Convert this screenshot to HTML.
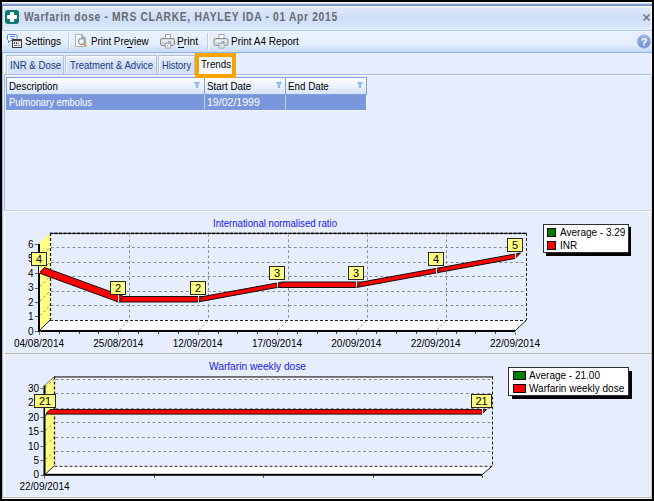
<!DOCTYPE html>
<html><head><meta charset="utf-8">
<style>
*{margin:0;padding:0;box-sizing:border-box}
html,body{width:654px;height:501px;overflow:hidden;background:#000}
body{position:relative;font-family:"Liberation Sans",sans-serif;font-size:11px;color:#000}
.a{position:absolute}
.t{white-space:nowrap;line-height:1;transform-origin:0 0}
#win{left:2px;top:2px;width:650px;height:497px;background:#e6edfd}
#title{left:2px;top:6px;width:650px;height:24px;background:linear-gradient(#f8fbff 0,#f8fbff 1px,#dce6f8 2px,#d8e4f8 6px,#cfdff8 10px,#d2e2fa 18px,#e0ebfc 22px,#e4eefd 24px)}
#tb{left:2px;top:31px;width:650px;height:21px;background:linear-gradient(#fafcff 0,#e8f0fd 1px,#e6effd 12px,#d4e4fa 17px,#c8dcf8 21px)}
.tab{top:55px;height:19px;border:1px solid #b0c2de;border-bottom:none;background:linear-gradient(#eef3fb 0,#e4ecf8 3px,#d8e4f7 6px,#d3e0f6 14px,#dae6f8 18px);box-shadow:inset 1px 1px 0 #f8fbff}
.tt{top:60px;color:#1a3a88}
svg text{font-family:"Liberation Sans",sans-serif;font-size:10px;fill:#000}
</style></head><body>
<div class="a" id="win"></div>
<div class="a" id="title"></div>
<div class="a" style="left:2px;top:5px;width:1px;height:492px;background:#a0b8dc"></div>
<div class="a" style="left:3px;top:5px;width:1px;height:492px;background:#e4ecfa"></div>
<div class="a" style="left:4px;top:53px;width:1px;height:444px;background:#fbfdff"></div>
<div class="a" style="left:5px;top:496px;width:645px;height:1px;background:#eaf4fd"></div>
<div class="a" style="left:2px;top:497px;width:650px;height:1px;background:#bcb8b0"></div>
<div class="a" style="left:2px;top:498px;width:650px;height:1px;background:#f4f4f0"></div>
<div class="a" style="left:651px;top:5px;width:1px;height:70px;background:#f4f8ff"></div>
<div class="a" style="left:4px;top:74px;width:647px;height:1px;background:#a8bce0"></div>
<div class="a" style="left:4px;top:74px;width:1px;height:137px;background:#a8bce0"></div>
<div class="a" style="left:5px;top:75px;width:646px;height:1px;background:#fbfdff"></div>
<div class="a" style="left:651px;top:75px;width:1px;height:136px;background:#c8d8f4"></div>
<div class="a" style="left:651px;top:212px;width:1px;height:286px;background:#c8c0b0"></div><div class="a" style="left:650px;top:212px;width:1px;height:285px;background:#f0f4fd"></div>

<div class="a" style="left:2px;top:2px;width:650px;height:1px;background:#fcfdff"></div>
<div class="a" style="left:2px;top:3px;width:650px;height:1px;background:#c4d4ee"></div>
<div class="a" style="left:2px;top:4px;width:650px;height:1px;background:#8aa6d6"></div>
<div class="a" style="left:2px;top:5px;width:650px;height:1px;background:#7390bc"></div>
<div class="a" style="left:2px;top:30px;width:650px;height:1px;background:#a8c8f0"></div>
<!-- app icon -->
<div class="a" style="left:5px;top:10px;width:14px;height:14px;border-radius:3px;background:#137870"></div>
<div class="a" style="left:10px;top:12px;width:4px;height:10px;background:#fff;border-radius:1px"></div>
<div class="a" style="left:7px;top:15px;width:10px;height:4px;background:#fff;border-radius:1px"></div>
<div class="a t" style="left:24px;top:11px;font-size:12px;font-weight:bold;color:#6a6c70;letter-spacing:0.8px;transform:scaleX(0.855)">Warfarin dose - MRS CLARKE, HAYLEY IDA - 01 Apr 2015</div>
<svg class="a" style="left:640px;top:10px" width="14" height="14"><path d="M3.5,4.5 L9.5,10.5 M9.5,4.5 L3.5,10.5" stroke="#707070" stroke-width="1.4"/></svg>

<div class="a" id="tb"></div>
<div class="a" style="left:2px;top:52px;width:650px;height:1px;background:#92b4e8"></div>
<div class="a t" style="left:25px;top:36px;transform:scaleX(0.905)">Settings</div>
<div class="a t" style="left:91px;top:36px;transform:scaleX(0.89)">Print Preview</div>
<div class="a t" style="left:177px;top:36px;transform:scaleX(0.93)">Print</div>
<div class="a t" style="left:231px;top:36px;transform:scaleX(0.91)">Print A4 Report</div>


<!-- toolbar separators -->
<div class="a" style="left:68px;top:33px;width:1px;height:17px;background:#b8cce8"></div>
<div class="a" style="left:69px;top:33px;width:1px;height:17px;background:#f8fbff"></div>
<div class="a" style="left:207px;top:33px;width:1px;height:17px;background:#b8cce8"></div>
<div class="a" style="left:208px;top:33px;width:1px;height:17px;background:#f8fbff"></div>
<svg class="a" style="left:0;top:0;z-index:5" width="654" height="120">
 <!-- settings -->
 <path d="M8.5,34.5 h7 a1.5,1.5 0 0 1 1.5,1.5 v3 a1.5,1.5 0 0 1 -1.5,1.5 h-5 l-2,2.5 v-2.5 a1.5,1.5 0 0 1 -1,-1.5 v-3 a1.5,1.5 0 0 1 1,-1.5z" fill="#fff" stroke="#4a8ae8"/>
 <line x1="10" y1="36.5" x2="15" y2="36.5" stroke="#4a8ae8"/>
 <line x1="10" y1="38.5" x2="14" y2="38.5" stroke="#7ab0f0"/>
 <rect x="12.5" y="39.5" width="9" height="8" fill="#e8eaf0" stroke="#3c3c3c"/>
 <rect x="12.5" y="39.5" width="9" height="1.5" fill="#3c3c3c"/>
 <rect x="14" y="42" width="1" height="2" fill="#444"/><rect x="16" y="42" width="1" height="2" fill="#444"/><rect x="18" y="42" width="1" height="2" fill="#999"/>
 <rect x="14" y="45" width="3" height="1" fill="#666"/><rect x="18" y="45" width="2" height="1" fill="#888"/>
 <!-- print preview -->
 <path d="M75.5,34.5 h6.5 l3.5,3.5 v8.5 h-10z" fill="#fafafa" stroke="#a8b0bc"/>
 <path d="M82,34.5 v3.5 h3.5" fill="#c8ccd4" stroke="#8090a0"/>
 <circle cx="81.5" cy="41.5" r="3" fill="#f4f8ff" stroke="#9aa0a8" stroke-width="1.3"/>
 <line x1="83.8" y1="43.8" x2="86.3" y2="46.3" stroke="#f0a030" stroke-width="2.2"/>
 <!-- print -->
 <g id="prn">
 <rect x="165.5" y="34.5" width="5" height="5" fill="#fff" stroke="#a0a4a8"/>
 <rect x="160.5" y="38.5" width="14" height="7" rx="1.5" fill="#d8d8d8" stroke="#909090"/>
 <rect x="162" y="40" width="11" height="2" fill="#ececec"/>
 <rect x="168" y="41" width="3" height="1.5" fill="#6aa8f0"/>
 <rect x="165.5" y="43.5" width="5" height="4.5" fill="#fff" stroke="#a0a4a8"/>
 <rect x="167" y="45" width="1.5" height="1.5" fill="#6aa8f0"/>
 </g>
 <use href="#prn" x="53.5" y="0"/>
 <!-- help -->
 <defs><linearGradient id="hg" x1="0" y1="0" x2="0" y2="1"><stop offset="0" stop-color="#9cb8e8"/><stop offset="1" stop-color="#6a8ed0"/></linearGradient></defs>
 <circle cx="644" cy="41.5" r="6.8" fill="url(#hg)"/>
 <circle cx="644" cy="41.5" r="6.8" fill="none" stroke="#a8c0e8" stroke-width="0.8"/>
 <text x="644" y="45.5" text-anchor="middle" style="font-family:'Liberation Sans',sans-serif;font-size:11px;font-weight:bold;fill:#fff">?</text>
 <!-- filter icons -->
 <g id="flt"><path d="M194.5,82.5 h5 l-1.8,2.5 v2.5 h-1.4 v-2.5z" fill="#a8c8f8" stroke="#78a8f0" stroke-width="0.8"/></g><use href="#flt" x="82"/><use href="#flt" x="163"/>
</svg>

<div class="a" style="left:178px;top:47px;width:6px;height:1px;background:#000"></div>
<div class="a" style="left:127px;top:47px;width:5px;height:1px;background:#000"></div>
<!-- tabs -->
<div class="a tab" style="left:6px;width:58px"></div>
<div class="a tab" style="left:65px;width:92px"></div>
<div class="a tab" style="left:158px;width:37px"></div>
<div class="a t tt" style="left:10px;transform:scaleX(0.88)">INR &amp; Dose</div>
<div class="a t tt" style="left:70px;transform:scaleX(0.87)">Treatment &amp; Advice</div>
<div class="a t tt" style="left:162px;transform:scaleX(0.85)">History</div>
<div class="a" style="left:195px;top:53px;width:41px;height:25px;border:4px solid #f5a300;background:#f8faff;z-index:6"></div>
<div class="a t" style="left:201px;top:59px;transform:scaleX(0.89);z-index:7">Trends</div>

<!-- grid -->
<div class="a" style="left:6px;top:77px;width:361px;height:18px;border:1px solid #7ea2e0;background:linear-gradient(#ffffff,#d6e4fb)"></div>
<div class="a" style="left:204px;top:78px;width:1px;height:16px;background:#7ea2e0"></div>
<div class="a" style="left:285px;top:78px;width:1px;height:16px;background:#7ea2e0"></div>
<div class="a t" style="left:9px;top:81px;transform:scaleX(0.89)">Description</div>
<div class="a t" style="left:207px;top:81px;transform:scaleX(0.89)">Start Date</div>
<div class="a t" style="left:288px;top:81px;transform:scaleX(0.89)">End Date</div>
<div class="a" style="left:6px;top:95px;width:360px;height:15px;background:#7a96dc"></div>
<div class="a" style="left:6px;top:110px;width:361px;height:1px;background:#f2f6fe"></div>
<div class="a" style="left:366px;top:95px;width:1px;height:15px;background:#f2f6fe"></div>
<div class="a" style="left:204px;top:95px;width:1px;height:15px;background:#c0d0f4"></div>
<div class="a" style="left:285px;top:95px;width:1px;height:15px;background:#c0d0f4"></div>
<div class="a t" style="left:9px;top:97px;color:#fff;transform:scaleX(0.854)">Pulmonary embolus</div>
<div class="a t" style="left:207px;top:97px;color:#fff;transform:scaleX(0.96)">19/02/1999</div>

<div class="a" style="left:5px;top:210px;width:647px;height:1px;background:#c4d4ee"></div>
<div class="a" style="left:5px;top:211px;width:646px;height:1px;background:#fafcff"></div>
<div class="a" style="left:5px;top:353px;width:646px;height:1px;background:#c0b8a8"></div>

<svg class="a" style="left:0;top:0" width="654" height="501">
<text x="213" y="226.5" textLength="124" lengthAdjust="spacingAndGlyphs" style="fill:#1818f0">International normalised ratio</text>
<polygon points="39,244 50,233 50.5,233 50.5,320 39,331" fill="#ffff80"/>
<polygon points="39,331 50,320 526,320 515,331" fill="#ffffff"/>
<line x1="51" y1="305.5" x2="526" y2="305.5" stroke="#8a8a8a" stroke-dasharray="2.7 2.7"/>
<line x1="40" y1="315.5" x2="50" y2="305.5" stroke="#8a8a8a" stroke-dasharray="2.5 2.5"/>
<line x1="51" y1="291.5" x2="526" y2="291.5" stroke="#8a8a8a" stroke-dasharray="2.7 2.7"/>
<line x1="40" y1="301" x2="50" y2="291" stroke="#8a8a8a" stroke-dasharray="2.5 2.5"/>
<line x1="51" y1="276.5" x2="526" y2="276.5" stroke="#8a8a8a" stroke-dasharray="2.7 2.7"/>
<line x1="40" y1="286.5" x2="50" y2="276.5" stroke="#8a8a8a" stroke-dasharray="2.5 2.5"/>
<line x1="51" y1="262.5" x2="526" y2="262.5" stroke="#8a8a8a" stroke-dasharray="2.7 2.7"/>
<line x1="40" y1="272" x2="50" y2="262" stroke="#8a8a8a" stroke-dasharray="2.5 2.5"/>
<line x1="51" y1="247.5" x2="526" y2="247.5" stroke="#8a8a8a" stroke-dasharray="2.7 2.7"/>
<line x1="40" y1="257.5" x2="50" y2="247.5" stroke="#8a8a8a" stroke-dasharray="2.5 2.5"/>
<line x1="129.5" y1="234" x2="129.5" y2="320" stroke="#8a8a8a" stroke-dasharray="2.7 2.7"/>
<line x1="119.33" y1="330" x2="129.33" y2="320" stroke="#8a8a8a" stroke-dasharray="2.5 2.5"/>
<line x1="208.5" y1="234" x2="208.5" y2="320" stroke="#8a8a8a" stroke-dasharray="2.7 2.7"/>
<line x1="198.67" y1="330" x2="208.67" y2="320" stroke="#8a8a8a" stroke-dasharray="2.5 2.5"/>
<line x1="288.5" y1="234" x2="288.5" y2="320" stroke="#8a8a8a" stroke-dasharray="2.7 2.7"/>
<line x1="278" y1="330" x2="288" y2="320" stroke="#8a8a8a" stroke-dasharray="2.5 2.5"/>
<line x1="367.5" y1="234" x2="367.5" y2="320" stroke="#8a8a8a" stroke-dasharray="2.7 2.7"/>
<line x1="357.33" y1="330" x2="367.33" y2="320" stroke="#8a8a8a" stroke-dasharray="2.5 2.5"/>
<line x1="446.5" y1="234" x2="446.5" y2="320" stroke="#8a8a8a" stroke-dasharray="2.7 2.7"/>
<line x1="436.67" y1="330" x2="446.67" y2="320" stroke="#8a8a8a" stroke-dasharray="2.5 2.5"/>
<line x1="50" y1="233.5" x2="527" y2="233.5" stroke="#505050" stroke-width="1.6"/>
<line x1="50" y1="233.5" x2="527" y2="233.5" stroke="#000" stroke-width="1.6" stroke-dasharray="3 1.5"/>
<line x1="51" y1="234.8" x2="526" y2="234.8" stroke="#fafcff" stroke-width="0.8"/>
<line x1="526.5" y1="233" x2="526.5" y2="320" stroke="#202020" stroke-dasharray="3 2"/>
<line x1="50.5" y1="233" x2="50.5" y2="320" stroke="#202020" stroke-width="1.3" stroke-dasharray="3 2"/>
<line x1="50" y1="320.5" x2="526" y2="320.5" stroke="#202020" stroke-dasharray="3 2"/>
<line x1="515" y1="331" x2="526.5" y2="320" stroke="#202020"/>
<line x1="39" y1="331" x2="50" y2="320" stroke="#202020"/>
<rect x="38" y="244" width="2" height="88" fill="#000"/>
<rect x="38" y="330" width="477" height="2" fill="#000"/>
<line x1="35" y1="331.5" x2="38" y2="331.5" stroke="#606060"/>
<text x="33.5" y="334.6" text-anchor="end">0</text>
<line x1="35" y1="316.5" x2="38" y2="316.5" stroke="#606060"/>
<text x="33.5" y="320.1" text-anchor="end">1</text>
<line x1="35" y1="302.5" x2="38" y2="302.5" stroke="#606060"/>
<text x="33.5" y="305.6" text-anchor="end">2</text>
<line x1="35" y1="288.5" x2="38" y2="288.5" stroke="#606060"/>
<text x="33.5" y="291.1" text-anchor="end">3</text>
<line x1="35" y1="273.5" x2="38" y2="273.5" stroke="#606060"/>
<text x="33.5" y="276.6" text-anchor="end">4</text>
<line x1="35" y1="258.5" x2="38" y2="258.5" stroke="#606060"/>
<text x="33.5" y="262.1" text-anchor="end">5</text>
<line x1="35" y1="244.5" x2="38" y2="244.5" stroke="#606060"/>
<text x="33.5" y="247.6" text-anchor="end">6</text>
<line x1="39.5" y1="332" x2="39.5" y2="335" stroke="#808080"/>
<text x="39" y="346.6" text-anchor="middle">04/08/2014</text>
<line x1="118.5" y1="332" x2="118.5" y2="335" stroke="#808080"/>
<text x="118.33" y="346.6" text-anchor="middle">25/08/2014</text>
<line x1="198.5" y1="332" x2="198.5" y2="335" stroke="#808080"/>
<text x="197.67" y="346.6" text-anchor="middle">12/09/2014</text>
<line x1="277.5" y1="332" x2="277.5" y2="335" stroke="#808080"/>
<text x="277" y="346.6" text-anchor="middle">17/09/2014</text>
<line x1="356.5" y1="332" x2="356.5" y2="335" stroke="#808080"/>
<text x="356.33" y="346.6" text-anchor="middle">20/09/2014</text>
<line x1="436.5" y1="332" x2="436.5" y2="335" stroke="#808080"/>
<text x="435.67" y="346.6" text-anchor="middle">22/09/2014</text>
<line x1="515.5" y1="332" x2="515.5" y2="335" stroke="#808080"/>
<text x="515" y="346.6" text-anchor="middle">22/09/2014</text>
<line x1="59.5" y1="332" x2="59.5" y2="334" stroke="#404040"/>
<line x1="79.5" y1="332" x2="79.5" y2="334" stroke="#404040"/>
<line x1="98.5" y1="332" x2="98.5" y2="334" stroke="#404040"/>
<line x1="138.5" y1="332" x2="138.5" y2="334" stroke="#404040"/>
<line x1="158.5" y1="332" x2="158.5" y2="334" stroke="#404040"/>
<line x1="178.5" y1="332" x2="178.5" y2="334" stroke="#404040"/>
<line x1="218.5" y1="332" x2="218.5" y2="334" stroke="#404040"/>
<line x1="237.5" y1="332" x2="237.5" y2="334" stroke="#404040"/>
<line x1="257.5" y1="332" x2="257.5" y2="334" stroke="#404040"/>
<line x1="297.5" y1="332" x2="297.5" y2="334" stroke="#404040"/>
<line x1="317.5" y1="332" x2="317.5" y2="334" stroke="#404040"/>
<line x1="336.5" y1="332" x2="336.5" y2="334" stroke="#404040"/>
<line x1="376.5" y1="332" x2="376.5" y2="334" stroke="#404040"/>
<line x1="396.5" y1="332" x2="396.5" y2="334" stroke="#404040"/>
<line x1="416.5" y1="332" x2="416.5" y2="334" stroke="#404040"/>
<line x1="456.5" y1="332" x2="456.5" y2="334" stroke="#404040"/>
<line x1="475.5" y1="332" x2="475.5" y2="334" stroke="#404040"/>
<line x1="495.5" y1="332" x2="495.5" y2="334" stroke="#404040"/>
<polygon points="39,273 118.33,302 123.83,296.5 44.5,267.5" fill="#ff0000" stroke="#101010" stroke-width="1" stroke-linejoin="bevel"/>
<polygon points="118.33,302 197.67,302 203.17,296.5 123.83,296.5" fill="#ff0000" stroke="#101010" stroke-width="1" stroke-linejoin="bevel"/>
<polygon points="197.67,302 277,287.5 282.5,282 203.17,296.5" fill="#ff0000" stroke="#101010" stroke-width="1" stroke-linejoin="bevel"/>
<polygon points="277,287.5 356.33,287.5 361.83,282 282.5,282" fill="#ff0000" stroke="#101010" stroke-width="1" stroke-linejoin="bevel"/>
<polygon points="356.33,287.5 435.67,273 441.17,267.5 361.83,282" fill="#ff0000" stroke="#101010" stroke-width="1" stroke-linejoin="bevel"/>
<polygon points="435.67,273 515,258.5 520.5,253 441.17,267.5" fill="#ff0000" stroke="#101010" stroke-width="1" stroke-linejoin="bevel"/>
<line x1="39.5" y1="266" x2="39.5" y2="273" stroke="#ffffff"/>
<rect x="31.5" y="252.5" width="15" height="13" fill="#ffff80" stroke="#282828"/>
<text x="39" y="263" text-anchor="middle" style="font-size:11px">4</text>
<line x1="118.5" y1="295" x2="118.5" y2="302" stroke="#ffffff"/>
<rect x="110.5" y="281.5" width="15" height="13" fill="#ffff80" stroke="#282828"/>
<text x="118" y="292" text-anchor="middle" style="font-size:11px">2</text>
<line x1="198.5" y1="295" x2="198.5" y2="302" stroke="#ffffff"/>
<rect x="190.5" y="281.5" width="15" height="13" fill="#ffff80" stroke="#282828"/>
<text x="198" y="292" text-anchor="middle" style="font-size:11px">2</text>
<line x1="277.5" y1="280.5" x2="277.5" y2="287.5" stroke="#ffffff"/>
<rect x="269.5" y="266.5" width="15" height="13" fill="#ffff80" stroke="#282828"/>
<text x="277" y="277" text-anchor="middle" style="font-size:11px">3</text>
<line x1="356.5" y1="280.5" x2="356.5" y2="287.5" stroke="#ffffff"/>
<rect x="348.5" y="266.5" width="15" height="13" fill="#ffff80" stroke="#282828"/>
<text x="356" y="277" text-anchor="middle" style="font-size:11px">3</text>
<line x1="436.5" y1="266" x2="436.5" y2="273" stroke="#ffffff"/>
<rect x="428.5" y="252.5" width="15" height="13" fill="#ffff80" stroke="#282828"/>
<text x="436" y="263" text-anchor="middle" style="font-size:11px">4</text>
<line x1="515.5" y1="251.5" x2="515.5" y2="258.5" stroke="#ffffff"/>
<rect x="507.5" y="238.5" width="15" height="13" fill="#ffff80" stroke="#282828"/>
<text x="515" y="249" text-anchor="middle" style="font-size:11px">5</text>
<text x="209" y="369.5" textLength="97" lengthAdjust="spacingAndGlyphs" style="fill:#1818f0">Warfarin weekly dose</text>
<polygon points="44.5,385.5 54.5,376.5 55,376.5 55,465.8 44.5,474.8" fill="#ffff80"/>
<line x1="44.5" y1="385.5" x2="54.5" y2="376.5" stroke="#808080"/>
<polygon points="44.5,474.8 54.5,465.8 492,465.8 482,474.8" fill="#ffffff"/>
<line x1="55.5" y1="451.5" x2="492" y2="451.5" stroke="#8a8a8a" stroke-dasharray="2.7 2.7"/>
<line x1="45.5" y1="459.35" x2="54.5" y2="451.35" stroke="#8a8a8a" stroke-dasharray="2.5 2.5"/>
<line x1="55.5" y1="437.5" x2="492" y2="437.5" stroke="#8a8a8a" stroke-dasharray="2.7 2.7"/>
<line x1="45.5" y1="444.9" x2="54.5" y2="436.9" stroke="#8a8a8a" stroke-dasharray="2.5 2.5"/>
<line x1="55.5" y1="422.5" x2="492" y2="422.5" stroke="#8a8a8a" stroke-dasharray="2.7 2.7"/>
<line x1="45.5" y1="430.45" x2="54.5" y2="422.45" stroke="#8a8a8a" stroke-dasharray="2.5 2.5"/>
<line x1="55.5" y1="408.5" x2="492" y2="408.5" stroke="#8a8a8a" stroke-dasharray="2.7 2.7"/>
<line x1="45.5" y1="416" x2="54.5" y2="408" stroke="#8a8a8a" stroke-dasharray="2.5 2.5"/>
<line x1="55.5" y1="393.5" x2="492" y2="393.5" stroke="#8a8a8a" stroke-dasharray="2.7 2.7"/>
<line x1="45.5" y1="401.55" x2="54.5" y2="393.55" stroke="#8a8a8a" stroke-dasharray="2.5 2.5"/>
<line x1="55.5" y1="379.5" x2="492" y2="379.5" stroke="#8a8a8a" stroke-dasharray="2.7 2.7"/>
<line x1="45.5" y1="387.1" x2="54.5" y2="379.1" stroke="#8a8a8a" stroke-dasharray="2.5 2.5"/>
<line x1="54.5" y1="377" x2="493" y2="377" stroke="#404040" stroke-width="1.6"/>
<line x1="55.5" y1="378.3" x2="492" y2="378.3" stroke="#fafcff" stroke-width="0.8"/>
<line x1="492.5" y1="376.5" x2="492.5" y2="465.8" stroke="#202020" stroke-dasharray="3 2"/>
<line x1="54.5" y1="376.5" x2="54.5" y2="465.8" stroke="#202020" stroke-width="1.3" stroke-dasharray="3 2"/>
<line x1="54.5" y1="466.3" x2="492" y2="466.3" stroke="#202020" stroke-dasharray="3 2"/>
<line x1="482" y1="474.8" x2="492.5" y2="465.8" stroke="#202020"/>
<line x1="44.5" y1="474.8" x2="54.5" y2="465.8" stroke="#202020"/>
<rect x="43.5" y="385.5" width="2" height="90.3" fill="#000"/>
<rect x="43.5" y="473.8" width="438.5" height="2" fill="#000"/>
<line x1="40.5" y1="475.5" x2="43.5" y2="475.5" stroke="#606060"/>
<text x="39" y="478.4" text-anchor="end">0</text>
<line x1="40.5" y1="460.5" x2="43.5" y2="460.5" stroke="#606060"/>
<text x="39" y="463.95" text-anchor="end">5</text>
<line x1="40.5" y1="446.5" x2="43.5" y2="446.5" stroke="#606060"/>
<text x="39" y="449.5" text-anchor="end">10</text>
<line x1="40.5" y1="431.5" x2="43.5" y2="431.5" stroke="#606060"/>
<text x="39" y="435.05" text-anchor="end">15</text>
<line x1="40.5" y1="417.5" x2="43.5" y2="417.5" stroke="#606060"/>
<text x="39" y="420.6" text-anchor="end">20</text>
<line x1="40.5" y1="403.5" x2="43.5" y2="403.5" stroke="#606060"/>
<text x="39" y="406.15" text-anchor="end">25</text>
<line x1="40.5" y1="388.5" x2="43.5" y2="388.5" stroke="#606060"/>
<text x="39" y="391.7" text-anchor="end">30</text>
<line x1="44.5" y1="475.8" x2="44.5" y2="478.8" stroke="#808080"/>
<text x="44.5" y="490" text-anchor="middle">22/09/2014</text>
<line x1="154.5" y1="475.8" x2="154.5" y2="477.8" stroke="#404040"/>
<line x1="263.5" y1="475.8" x2="263.5" y2="477.8" stroke="#404040"/>
<line x1="373.5" y1="475.8" x2="373.5" y2="477.8" stroke="#404040"/>
<line x1="482.5" y1="475.8" x2="482.5" y2="477.8" stroke="#404040"/>
<polygon points="45.5,414.11 482,414.11 486.5,409.61 50,409.61" fill="#ff0000" stroke="#101010" stroke-width="1" stroke-linejoin="bevel"/>
<line x1="45.5" y1="407.11" x2="45.5" y2="414.11" stroke="#ffffff"/>
<rect x="34.5" y="394.5" width="21" height="13" fill="#ffff80" stroke="#282828"/>
<text x="45" y="405" text-anchor="middle" style="font-size:11px">21</text>
<line x1="482.5" y1="407.11" x2="482.5" y2="414.11" stroke="#ffffff"/>
<rect x="471.5" y="394.5" width="20" height="13" fill="#ffff80" stroke="#282828"/>
<text x="481.5" y="405" text-anchor="middle" style="font-size:11px">21</text>
<!-- legends -->
<rect x="546" y="227" width="85" height="29" fill="#000"/>
<rect x="543.5" y="224.5" width="85" height="28" fill="#fff" stroke="#303030"/>
<rect x="547.5" y="228.5" width="8" height="8" fill="#008000" stroke="#000"/>
<rect x="547.5" y="241.5" width="8" height="8" fill="#ff0000" stroke="#000"/>
<text x="560" y="236">Average - 3.29</text>
<text x="560" y="249">INR</text>
<rect x="512" y="371" width="120" height="28" fill="#000"/>
<rect x="508.5" y="367.5" width="120" height="28" fill="#fff" stroke="#303030"/>
<rect x="513.5" y="371.5" width="12" height="8" fill="#008000" stroke="#000"/>
<rect x="513.5" y="384.5" width="12" height="8" fill="#ff0000" stroke="#000"/>
<text x="529" y="379">Average - 21.00</text>
<text x="529" y="392">Warfarin weekly dose</text>
</svg>
</body></html>
